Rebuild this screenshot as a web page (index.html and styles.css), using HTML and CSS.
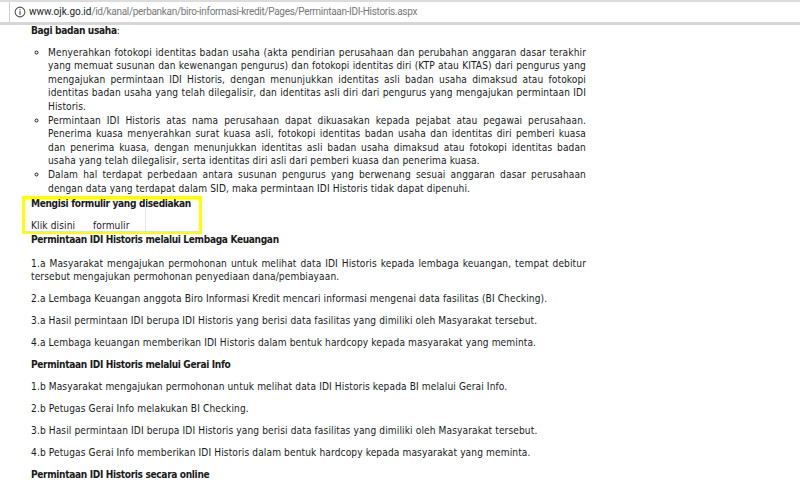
FILE: index.html
```html
<!DOCTYPE html>
<html lang="en">
<head>
  <meta charset="UTF-8" />
  <title>Permintaan IDI Historis</title>
  <link rel="stylesheet" href="styles.css">
</head>
<body>

<div class="toolbar">
  <div class="address">
    <svg class="info-icon" viewBox="0 0 12 12" width="12" height="12">
      <circle cx="6" cy="6" r="4.9" fill="none" stroke="#555" stroke-width="1.1"/>
      <rect x="5.4" y="5.2" width="1.2" height="3.6" fill="#555"/>
      <rect x="5.4" y="3.1" width="1.2" height="1.2" fill="#555"/>
    </svg>
    <span class="host">www.ojk.go.id</span><span class="path">/id/kanal/perbankan/biro-informasi-kredit/Pages/Permintaan-IDI-Historis.aspx</span>
  </div>
</div>

<div class="content">
  <p class="intro"><b>Bagi badan usaha</b>:</p>
  <ul>
    <li>Menyerahkan fotokopi identitas badan usaha (akta pendirian perusahaan dan perubahan anggaran dasar terakhir yang memuat susunan dan kewenangan pengurus) dan fotokopi identitas diri (KTP atau KITAS) dari pengurus yang mengajukan permintaan IDI Historis, dengan menunjukkan identitas asli badan usaha dimaksud atau fotokopi identitas badan usaha yang telah dilegalisir, dan identitas asli diri dari pengurus yang mengajukan permintaan IDI Historis.</li>
    <li>Permintaan IDI Historis atas nama perusahaan dapat dikuasakan kepada pejabat atau pegawai perusahaan. Penerima kuasa menyerahkan surat kuasa asli, fotokopi identitas badan usaha dan identitas diri pemberi kuasa dan penerima kuasa, dengan menunjukkan identitas asli badan usaha dimaksud atau fotokopi identitas badan usaha yang telah dilegalisir, serta identitas diri asli dari pemberi kuasa dan penerima kuasa.</li>
    <li>Dalam hal terdapat perbedaan antara susunan pengurus yang berwenang sesuai anggaran dasar perusahaan dengan data yang terdapat dalam SID, maka permintaan IDI Historis tidak dapat dipenuhi.</li>
  </ul>

  <div class="form-block">
    <div class="highlight"></div>
    <div class="cell-line"></div>
    <p class="form-title"><b>Mengisi formulir yang disediakan</b></p>
    <div class="form-row">
      <span class="form-label">Klik disini</span>
      <span class="form-link">formulir</span>
    </div>
  </div>

  <p class="heading"><b>Permintaan IDI Historis melalui Lembaga Keuangan</b></p>
  <p>1.a Masyarakat mengajukan permohonan untuk melihat data IDI Historis kepada lembaga keuangan, tempat debitur tersebut mengajukan permohonan penyediaan dana/pembiayaan.</p>
  <p>2.a Lembaga Keuangan anggota Biro Informasi Kredit mencari informasi mengenai data fasilitas (BI Checking).</p>
  <p>3.a Hasil permintaan IDI berupa IDI Historis yang berisi data fasilitas yang dimiliki oleh Masyarakat tersebut.</p>
  <p>4.a Lembaga keuangan memberikan IDI Historis dalam bentuk hardcopy kepada masyarakat yang meminta.</p>
  <p><b>Permintaan IDI Historis melalui Gerai Info</b></p>
  <p>1.b Masyarakat mengajukan permohonan untuk melihat data IDI Historis kepada BI melalui Gerai Info.</p>
  <p>2.b Petugas Gerai Info melakukan BI Checking.</p>
  <p>3.b Hasil permintaan IDI berupa IDI Historis yang berisi data fasilitas yang dimiliki oleh Masyarakat tersebut.</p>
  <p>4.b Petugas Gerai Info memberikan IDI Historis dalam bentuk hardcopy kepada masyarakat yang meminta.</p>
  <p><b>Permintaan IDI Historis secara online</b></p>
</div>

</body>
</html>
```

FILE: styles.css
```css
html, body {
  height: 100%;
}

body {
  margin: 0;
  overflow: hidden;
  background: #fff;
  color: #1a1a1a;
  font-family: "DejaVu Sans Condensed", "DejaVu Sans", sans-serif;
  font-stretch: condensed;
  font-size: 10.1px;
  line-height: 13.6px;
  letter-spacing: 0.11px;
}

b {
  letter-spacing: -0.35px;
}

.toolbar {
  height: 20px;
  padding-left: 9px;
  border-top: 2px solid #dcdcdc;
  border-bottom: 3px solid #d6d6d6;
}

.address {
  display: flex;
  align-items: center;
  height: 20px;
  padding-left: 4px;
  border-left: 1px solid #cfcfcf;
  font-family: Roboto, sans-serif;
  font-stretch: normal;
  font-size: 10px;
  letter-spacing: 0;
  white-space: nowrap;
}

.info-icon {
  margin-right: 3px;
}

.host {
  color: #222;
}

.path {
  color: #777;
  letter-spacing: -0.3px;
}

.content {
  width: 555px;
  margin-top: -1px;
  padding-left: 31px;
}

p {
  margin: 0 0 8.4px;
  text-align: justify;
}

.intro {
  margin-bottom: 8px;
}

ul {
  margin: 0;
  padding-left: 17px;
  list-style: circle;
  text-align: justify;
}

.form-block {
  position: relative;
  margin-top: 2px;
}

.highlight {
  position: absolute;
  left: -9px;
  top: -1px;
  width: 174px;
  height: 32px;
  border: 3px solid #ffff00;
}

.cell-line {
  position: absolute;
  left: 114px;
  top: 2px;
  width: 1px;
  height: 32px;
  background: #e6e6e6;
}

.form-title {
  margin-bottom: 8px;
}

.form-row {
  display: flex;
  height: 14px;
}

.form-label {
  width: 62px;
}

.heading {
  margin-bottom: 10.4px;
}
```
